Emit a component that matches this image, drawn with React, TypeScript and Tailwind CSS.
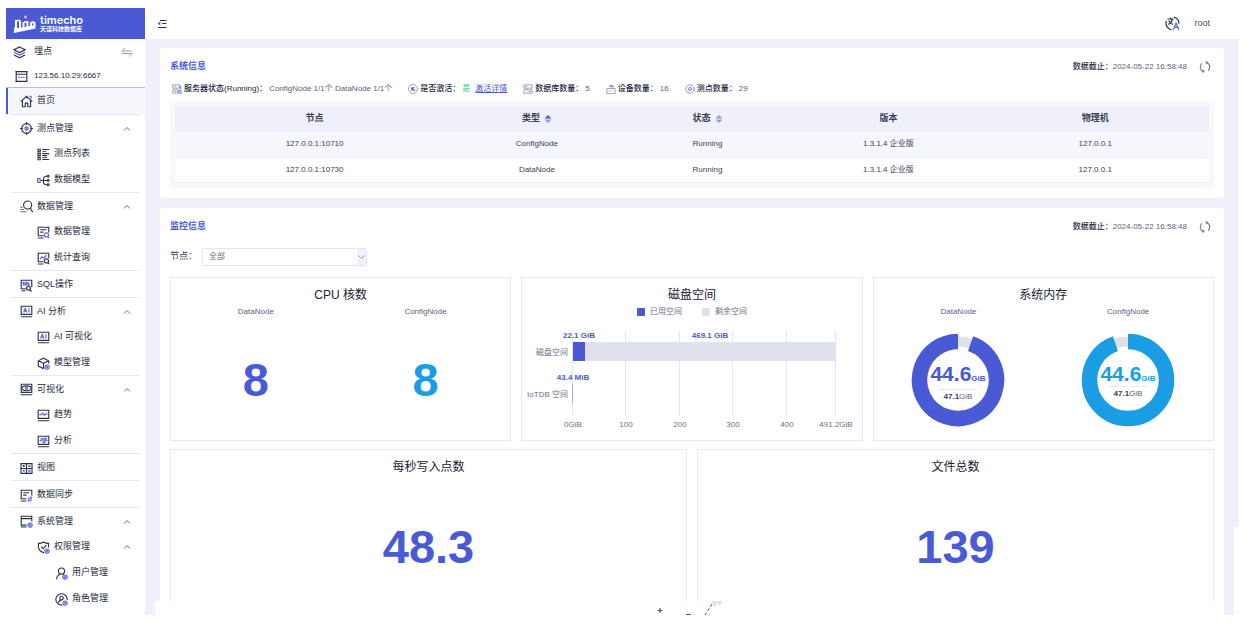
import { useState, type ReactNode } from 'react';
import clsx from 'clsx';

type IconName =
    | 'layers' | 'server' | 'home' | 'target' | 'list' | 'model' | 'search' | 'dataManage'
    | 'query' | 'sql' | 'ai' | 'cube' | 'eye' | 'trend' | 'analysis' | 'view' | 'sync'
    | 'system' | 'shield' | 'user' | 'role';

interface NavItem {
    label: string;
    icon: IconName;
    children?: NavItem[];
}

const DARK = '#2f3347';
const BLUE = '#5563e6';

const gear = (
    <g stroke={BLUE}>
        <circle cx="12.4" cy="12.4" r="2.6" />
        <circle cx="12.4" cy="12.4" r="0.6" />
    </g>
);

const monitor = <path d="M1.5 1.5h13v10h-13zM1 14.5h14" />;

const icons: Record<IconName, ReactNode> = {
    layers: (
        <>
            <path d="M8 1.2 14.8 4.6 8 8 1.2 4.6z" />
            <path d="M1.2 7.8 8 11.2l6.8-3.4" stroke={BLUE} />
            <path d="M1.2 11 8 14.6l6.8-3.6" />
        </>
    ),
    server: (
        <>
            <path d="M1.5 2h13v12h-13zM0.5 2h15M0.5 14h15M1.5 5.2h13" />
            <path d="M4 9h2M7 9h2M10 9h2" stroke={BLUE} />
        </>
    ),
    home: (
        <>
            <path d="M1 8.2 8 1.6l7 6.6M3 7v7.5h3.5V10h3v4.5H13V7" />
            <path d="M11.5 1.5h2.2v3" stroke={BLUE} />
        </>
    ),
    target: (
        <>
            <circle cx="8" cy="8" r="6" />
            <path d="M8 0v3.4M8 12.6V16M0 8h3.4M12.6 8H16" />
            <circle cx="8" cy="8" r="2" stroke={BLUE} />
            <circle cx="8" cy="8" r="0.4" stroke={BLUE} />
        </>
    ),
    list: (
        <>
            <path d="M1.2 1.6H4v2.8H1.2zM1.2 6.6H4v2.8H1.2zM1.2 11.6H4v2.8H1.2z" />
            <path d="M6.5 1.8h8.5M6.5 7h8.5M6.5 9.4h6M6.5 14.2H15" />
            <path d="M6.5 4.2h5M6.5 11.8h6" stroke={BLUE} />
        </>
    ),
    model: (
        <>
            <rect x="0.8" y="5.6" width="3" height="4.8" stroke={BLUE} />
            <path d="M4.5 8h8M13 2.8H11Q7.8 3 7.8 8t3.2 5.2h2" />
            <circle cx="13.8" cy="2.8" r="1.1" />
            <circle cx="13.8" cy="8" r="1.1" />
            <circle cx="13.8" cy="13.2" r="1.1" />
        </>
    ),
    search: (
        <>
            <circle cx="9.4" cy="6.2" r="5" />
            <path d="m12.6 10 3 4.8" />
            <path d="M0.5 9h2.6M0.5 11.7h4.4M0.5 14.4h7.5" stroke={BLUE} />
        </>
    ),
    dataManage: (
        <>
            <path d="M8 12H1.5V1.5h13V8M1 14.8h7M4 4.6h7.5M4 7.6h4" />
            <circle cx="11.6" cy="11" r="2.5" stroke={BLUE} />
            <path d="m13.4 13 1.8 2" stroke={BLUE} />
        </>
    ),
    query: (
        <>
            <path d="M8 12H1.5V1.5h13V8M1 14.8h7" />
            <path d="m3.6 8.8 2.6-3 2 1.8 3.6-3.6" stroke={BLUE} />
            <circle cx="11.6" cy="11" r="2.5" />
            <path d="m13.4 13 1.8 2" />
        </>
    ),
    sql: (
        <>
            <path d="M7 12H1.5V1.5h13V10M2 14.5h5" />
            <path d="M5.4 4.2H3.8v1.5h1.4v1.7H3.6M8.6 4.2H7v3h1.8zM10.6 4v3.4h1.8" stroke={BLUE} />
            <circle cx="10.4" cy="11.4" r="2.4" />
            <path d="m12 13.2 2.2 2.2" />
        </>
    ),
    ai: (
        <>
            {monitor}
            <path d="m4.4 9.2 2-5.2 2 5.2M5.2 7.6h2.6M11 4v5.2" stroke={BLUE} />
        </>
    ),
    cube: (
        <>
            <path d="M8 14.4 1.6 11.2V4.6L8 1.4l6.4 3.2V8M1.6 4.6 8 7.8l6.4-3.2M8 7.8v6.6" />
            {gear}
        </>
    ),
    eye: (
        <>
            {monitor}
            <ellipse cx="8" cy="6.5" rx="5.6" ry="3" />
            <circle cx="8" cy="6.5" r="1.4" stroke={BLUE} />
        </>
    ),
    trend: (
        <>
            {monitor}
            <path d="M3 7h2.4l1.8-2 2 2.8L11 6h2" stroke={BLUE} />
        </>
    ),
    analysis: (
        <>
            {monitor}
            <path d="M3.2 7h2V4.4h2.4v5h2V4h1.6v3h1.8" stroke={BLUE} />
        </>
    ),
    view: (
        <>
            <path d="M1.2 2h13.6v12H1.2zM1.2 8h13.6M8 2v12M3.4 5h2.4M4.6 3.8v2.4M10 5h3M3.4 11h2.4" />
            <path d="M10 10.2h3M10 12h3" stroke={BLUE} />
        </>
    ),
    sync: (
        <>
            <path d="M8 12H1.5V1.5h13V8M1 14.8h7M4 4.6h7.5M4 7.6h4" />
            <path d="M11 10v5l-1.4-1.6M13.4 15v-5l1.4 1.6" stroke={BLUE} />
        </>
    ),
    system: (
        <>
            <path d="M8 12.5H1.5V1.5h13V8M1.5 4.4h13M1 14.8h7" />
            {gear}
        </>
    ),
    shield: (
        <>
            <path d="M8.6 14.6Q1.8 12 1.8 7V3q3.6 0 6.2-1.8Q10.6 3 14.2 3v5" />
            <path d="m5 7 2.6 2.4L11.4 5" />
            {gear}
        </>
    ),
    user: (
        <>
            <circle cx="8" cy="5" r="3.8" />
            <path d="M2 15q.2-4.6 4-6M9.8 9.2l1 .8" />
            {gear}
        </>
    ),
    role: (
        <>
            <path d="M9 14.9A7 7 0 1 1 15 8.6" />
            <circle cx="8" cy="6.2" r="2.2" />
            <path d="M4.2 12.6q.4-3.400 3.800-3.800" />
            {gear}
        </>
    ),
};

const Icon = ({ name }: { name: IconName }) => (
    <svg viewBox="0 0 16 16" className="size-[13px] shrink-0" fill="none" stroke={DARK} strokeWidth="1.4" aria-hidden="true">
        {icons[name]}
    </svg>
);

const navItems: NavItem[] = [
    {
        label: '测点管理',
        icon: 'target',
        children: [
            { label: '测点列表', icon: 'list' },
            { label: '数据模型', icon: 'model' },
        ],
    },
    {
        label: '数据管理',
        icon: 'search',
        children: [
            { label: '数据管理', icon: 'dataManage' },
            { label: '统计查询', icon: 'query' },
        ],
    },
    { label: 'SQL操作', icon: 'sql' },
    {
        label: 'AI 分析',
        icon: 'ai',
        children: [
            { label: 'AI 可视化', icon: 'ai' },
            { label: '模型管理', icon: 'cube' },
        ],
    },
    {
        label: '可视化',
        icon: 'eye',
        children: [
            { label: '趋势', icon: 'trend' },
            { label: '分析', icon: 'analysis' },
        ],
    },
    { label: '视图', icon: 'view' },
    { label: '数据同步', icon: 'sync' },
    {
        label: '系统管理',
        icon: 'system',
        children: [
            {
                label: '权限管理',
                icon: 'shield',
                children: [
                    { label: '用户管理', icon: 'user' },
                    { label: '角色管理', icon: 'role' },
                ],
            },
        ],
    },
];

const indents = ['pl-[14px]', 'pl-[31px]', 'pl-[49px]'];

const NavEntry = ({ item, level = 0 }: { item: NavItem; level?: number }) => {
    const [open, setOpen] = useState(true);
    const row = clsx('flex w-full items-center gap-1 pt-[2px] pr-[14px] text-left', indents[level]);

    if (!item.children) {
        return (
            <li>
                <a href="#" className={clsx(row, 'h-[26px]')}>
                    <Icon name={item.icon} />
                    {item.label}
                </a>
            </li>
        );
    }

    return (
        <li>
            <button
                type="button"
                aria-expanded={open}
                onClick={() => setOpen(!open)}
                className={clsx(row, level === 0 ? 'h-[25px]' : 'h-[26px]')}
            >
                <Icon name={item.icon} />
                <span className="flex-1">{item.label}</span>
                <svg viewBox="0 0 8 8" className={clsx('size-2', !open && 'rotate-180')} fill="none" stroke="#6b6f80">
                    <path d="m1 5.5 3-3 3 3" />
                </svg>
            </button>
            {open && (
                <ul>
                    {item.children.map((child) => (
                        <NavEntry key={child.label} item={child} level={level + 1} />
                    ))}
                </ul>
            )}
        </li>
    );
};

const Sidebar = () => (
    <aside className="w-[139px] shrink-0 overflow-hidden bg-white text-[9px] text-[#24283a]">
        <a href="#" className="flex h-[31px] items-center gap-1 bg-[#495ad4] pl-2 text-white">
            <svg viewBox="0 0 22 18" className="h-[18px] w-[22px]" fill="none" stroke="white" strokeWidth="2" aria-hidden="true">
                <path d="M0 18v-5.5l4 .5 17.500-3V13.500z" fill="white" stroke="none" />
                <path d="M2 14V5M6 13V5.500M9.500 13V7M13.500 12.500V6M17 12V8q2-1.500 3.500 0v3" />
                <path d="M1 5.500h5M10 7h3.500" strokeWidth="1.500" />
                <circle cx="11.500" cy="2" r="1.400" fill="#f5b98a" stroke="none" />
            </svg>
            <span className="flex flex-col">
                <span className="font-['Inter'] text-[11px] leading-[11px] font-semibold">timecho</span>
                <span className="text-[6px] leading-[7px] font-bold">天谋科技数据库</span>
            </span>
        </a>
        <div className="border-b border-[#b9bccb] pr-3 pl-[7px]">
            <div className="flex h-6 items-center gap-2 pt-[2px]">
                <Icon name="layers" />
                <span className="flex-1">埋点</span>
                <button type="button" aria-label="切换实例">
                    <svg viewBox="0 0 12 10" className="h-[10px] w-3" fill="none" stroke="#9ba0b8">
                        <path d="M4 1 1 4h10M1 6.5h10l-3 3" />
                    </svg>
                </button>
            </div>
            <div className="flex h-6 items-center gap-[6px] pt-[2px] pl-[2px]">
                <Icon name="server" />
                <span className="text-[8px]">123.56.10.29:6667</span>
            </div>
        </div>
        <nav>
            <a href="#" aria-current="page" className="flex h-[26px] items-center gap-1 border-l-2 border-[#495ad4] bg-[#f6f7fc] pl-3">
                <Icon name="home" />
                首页
            </a>
            {navItems.map((item) => (
                <ul key={item.label} className="before:mx-[5px] before:block before:h-px before:bg-[#e6e7f3]">
                    <NavEntry item={item} />
                </ul>
            ))}
        </nav>
    </aside>
);

const Header = () => (
    <header className="flex h-[31px] shrink-0 items-center justify-between bg-white pr-[29px] pl-3">
        <button type="button" aria-label="收起菜单">
            <svg viewBox="0 0 10 10" className="size-[10px]" fill="none" stroke={DARK}>
                <path d="M3 1.5h6.500M5 4.500h4.500M1 8.500h8.500" />
                <path d="M3.400 2.300.6 4.500l2.800 2.200z" fill={BLUE} stroke="none" />
            </svg>
        </button>
        <div className="flex items-center gap-[14px] text-[9px] text-[#4b4f63]">
            <button type="button" aria-label="语言">
                <svg viewBox="0 0 16 16" className="size-[15px]" fill="none" stroke={DARK} strokeWidth="1.3">
                    <path d="M9.5 1.2a7 7 0 0 1 5.3 7M7 14.8A7 7 0 0 1 1.6 5.4" />
                    <path d="M2.5 3.2h7M6 1.5v1.7M3.6 9q3.6-2 4.4-5.8M4 4.8Q5.5 8 8.6 9" />
                    <path d="m8.8 14.6 3-7 3 7M9.8 12.2h4" stroke={BLUE} />
                </svg>
            </button>
            <span>root</span>
        </div>
    </header>
);

const SectionHead = ({ title }: { title: string }) => (
    <div className="flex h-4 items-center justify-between">
        <h2 className="text-[9px] font-bold text-[#495ad4]">{title}</h2>
        <div className="flex items-center pr-[3px] text-[8px] text-[#5b5f7a]">
            <span className="font-medium text-[#24283a]">数据截止：</span>
            <time>2024-05-22 16:58:48</time>
            <button type="button" aria-label="刷新" className="ml-3">
                <svg viewBox="0 0 12 12" className="size-3" fill="none" stroke="#7c809a" strokeWidth="1.2">
                    <path d="M7.5 1.4a4.8 4.8 0 0 1 1.6 8.2M4.5 10.6a4.8 4.8 0 0 1-1.6-8.2" />
                    <path d="M9 1.2 7.2 1.3l.6 1.8M3 10.8l1.8-.1-.6-1.8" />
                </svg>
            </button>
        </div>
    </div>
);

const StatItem = ({ label, icon, children }: { label: string; icon: ReactNode; children: ReactNode }) => (
    <div className="flex items-center gap-[2px]">
        <svg viewBox="0 0 12 12" className="size-[10px]" fill="none" stroke="#8d91ac" aria-hidden="true">
            {icon}
        </svg>
        <span className="font-medium text-[#24283a]">{label}：</span>
        {children}
    </div>
);

const SortArrows = ({ active }: { active?: boolean }) => (
    <svg viewBox="0 0 8 8" className="size-2" aria-hidden="true">
        <path d="M4 0 7.5 3.4h-7z" fill={active ? '#495ad4' : '#9b9eb6'} />
        <path d="M4 8 7.5 4.6h-7z" fill="#9b9eb6" />
    </svg>
);

const nodes = [
    { address: '127.0.0.1:10710', type: 'ConfigNode', status: 'Running', version: '1.3.1.4 企业版', host: '127.0.0.1' },
    { address: '127.0.0.1:10730', type: 'DataNode', status: 'Running', version: '1.3.1.4 企业版', host: '127.0.0.1' },
];

const SystemInfo = () => (
    <section className="rounded bg-white px-[10px] pt-[11px] pb-[10px]">
        <SectionHead title="系统信息" />
        <div className="mt-[6px] flex h-4 items-center gap-4 pl-[2px] text-[8px] whitespace-nowrap text-[#5b5f7a]">
            <StatItem
                label="服务器状态(Running)"
                icon={<><path d="M1 1h8v4H1zM1 7h6v4H1zM3 3h2M3 9h2" /><path d="M8 8h3v3H8zM10 2v4h1" stroke={BLUE} /></>}
            >
                <span>ConfigNode 1/1个 DataNode 1/1个</span>
            </StatItem>
            <StatItem
                label="是否激活"
                icon={<><circle cx="6" cy="6" r="5.4" /><path d="M4.5 8V4.5H8M4.5 4.5l4 4" stroke={BLUE} strokeWidth="1.4" /></>}
            >
                <span className="text-[#3ecf8e]">是</span>
                <a href="#" className="ml-[3px] text-[#495ad4] underline">激活详情</a>
            </StatItem>
            <StatItem
                label="数据库数量"
                icon={<><path d="M1 1h10v4H1zM1 7h10v4H1zM5 5v2" /><path d="M3 3h2M7 9h2" stroke={BLUE} /></>}
            >
                <span>5</span>
            </StatItem>
            <StatItem
                label="设备数量"
                icon={<><path d="M1 5.5h10v6H1zM3 8.5h1.5M6 8.5h1.5" /><path d="M3.5 3q3-3 6 0M8 4v1.5M5 3.5q1.5-1 3 0" stroke={BLUE} /></>}
            >
                <span>16</span>
            </StatItem>
            <StatItem
                label="测点数量"
                icon={<><circle cx="6" cy="6" r="5" strokeDasharray="6 2" /><circle cx="6" cy="6" r="1.8" stroke={BLUE} /><path d="M6 0v2M6 10v2M0 6h2M10 6h2" /></>}
            >
                <span>29</span>
            </StatItem>
        </div>
        <div className="mt-1 bg-[#f7f8fc] p-[5px]">
            <table className="w-full table-fixed text-center text-[8px] text-[#3a3d57]">
                <thead className="bg-[#f0f0fb] text-[9px]">
                    <tr className="h-[26px]">
                        <th className="w-[27%] font-bold">节点</th>
                        <th className="w-[16%] font-bold">
                            <button type="button" className="inline-flex items-center gap-1">类型<SortArrows active /></button>
                        </th>
                        <th className="w-[17%] font-bold">
                            <button type="button" className="inline-flex items-center gap-1">状态<SortArrows /></button>
                        </th>
                        <th className="w-[18%] font-bold">版本</th>
                        <th className="w-[22%] font-bold">物理机</th>
                    </tr>
                </thead>
                <tbody>
                    {nodes.map((node) => (
                        <tr key={node.address} className="h-[25px] border-b border-[#ecedf6] odd:bg-[#f6f7fc] even:bg-white">
                            <td>{node.address}</td>
                            <td>{node.type}</td>
                            <td>{node.status}</td>
                            <td>{node.version}</td>
                            <td>{node.host}</td>
                        </tr>
                    ))}
                </tbody>
            </table>
        </div>
    </section>
);

const Panel = ({ title, className, children }: { title: string; className?: string; children: ReactNode }) => (
    <article className={clsx('flex min-w-0 flex-col border border-[#e8e8f3] pt-2', className)}>
        <h3 className="text-center text-[12px] leading-[18px] text-[#1d2033]">{title}</h3>
        {children}
    </article>
);

const NodeColumn = ({ name, children }: { name: string; children: ReactNode }) => (
    <div className="flex flex-1 flex-col text-center">
        <p className="text-[8px] leading-4 text-[#5b5f7a]">{name}</p>
        <div className="flex flex-1 items-center justify-center">{children}</div>
    </div>
);

const ticks = [
    { x: 47, label: '0GiB' },
    { x: 100, label: '100' },
    { x: 154, label: '200' },
    { x: 207, label: '300' },
    { x: 261, label: '400' },
    { x: 310, label: '491.2GiB' },
];

const DiskChart = () => (
    <svg viewBox="0 0 331 108" className="h-[108px] w-[331px]" fontSize="8" role="img" aria-label="磁盘空间">
        {ticks.map((tick) => (
            <g key={tick.label}>
                <rect x={tick.x - 1} y="5" width="1" height="85" fill="#e4e5f1" />
                <text x={tick.x} y="101" textAnchor="middle" fill="#6b6f87">{tick.label}</text>
            </g>
        ))}
        <rect x="47" y="16" width="12" height="19" fill="#495ad4" />
        <rect x="59" y="16" width="251" height="19" fill="#dfe1ec" />
        <rect x="46" y="58" width="1" height="19" fill="#a9b1ea" />
        <g fill="#495ad4" fontWeight="bold" textAnchor="middle">
            <text x="53" y="12">22.1 GiB</text>
            <text x="184" y="12">469.1 GiB</text>
            <text x="47" y="54">43.4 MiB</text>
        </g>
        <g fill="#6b6f87" textAnchor="end">
            <text x="42" y="29">磁盘空间</text>
            <text x="42" y="71">IoTDB 空间</text>
        </g>
    </svg>
);

interface DonutProps {
    color: string;
    used: number;
    total: number;
    gapFirst?: boolean;
}

const Donut = ({ color, used, total, gapFirst }: DonutProps) => {
    const share = (used / total) * 100;
    const start = gapFirst ? -90 + (100 - share) * 3.6 : -90;
    const lineY = gapFirst ? 56 : 53;
    return (
        <svg viewBox="0 0 94 94" className="size-[94px]" role="img" aria-label={`${used} / ${total} GiB`}>
            <circle cx="47" cy="47" r="38.5" fill="none" stroke="#dfe1ec" strokeWidth="10" />
            <circle
                cx="47"
                cy="47"
                r="38.5"
                fill="none"
                stroke={color}
                strokeWidth="15.5"
                pathLength="100"
                strokeDasharray={`${share} ${100 - share}`}
                transform={`rotate(${start} 47 47)`}
            />
            <text x="47" y="48" textAnchor="middle" fill={color} fontWeight="bold" fontSize="21">
                {used}
                <tspan fontSize="8">GiB</tspan>
            </text>
            <rect x="28" y={lineY} width="38" height="1" fill="#e8e8f3" />
            <text x="47" y={lineY + 10} textAnchor="middle" fill="#3a3d57" fontSize="8">
                <tspan fontWeight="bold">{total}</tspan>
                <tspan fill="#5b5f7a">GiB</tspan>
            </text>
        </svg>
    );
};

const MonitorInfo = () => (
    <section className="rounded bg-white px-[10px] pt-[11px] pb-[10px]">
        <SectionHead title="监控信息" />
        <div className="mt-[13px] flex items-center text-[#3a3d57]">
            <label htmlFor="node" className="w-8 text-[9px]">节点：</label>
            <div className="relative w-[165px]">
                <select id="node" className="block h-[18px] w-full appearance-none rounded-xs border border-[#e4e5f1] bg-white pl-[6px] text-[8px] text-[#6b6f87]">
                    <option>全部</option>
                </select>
                <span className="pointer-events-none absolute inset-y-px right-px flex w-[9px] items-center bg-[#f0f0fb]">
                    <svg viewBox="0 0 9 8" className="h-2 w-[9px]" fill="none" stroke="#9ba0b8">
                        <path d="m1.5 2.5 3 3 3-3" />
                    </svg>
                </span>
            </div>
        </div>
        <div className="mt-[11px] grid grid-cols-3 gap-[10px]">
            <Panel title="CPU 核数" className="min-h-[164px]">
                <div className="flex flex-1">
                    <NodeColumn name="DataNode">
                        <strong className="text-[47px] leading-none text-[#495ad4]">8</strong>
                    </NodeColumn>
                    <NodeColumn name="ConfigNode">
                        <strong className="text-[47px] leading-none text-[#1a9de5]">8</strong>
                    </NodeColumn>
                </div>
            </Panel>
            <Panel title="磁盘空间" className="min-h-[164px]">
                <div className="flex h-4 items-center justify-center gap-5 text-[8px] text-[#6b6f87]">
                    <span className="flex items-center gap-[5px]"><i className="size-2 rounded-[1px] bg-[#495ad4]" />已用空间</span>
                    <span className="flex items-center gap-[5px]"><i className="size-2 rounded-[1px] bg-[#dfe1ec]" />剩余空间</span>
                </div>
                <div className="flex flex-1 items-center justify-center">
                    <DiskChart />
                </div>
            </Panel>
            <Panel title="系统内存" className="min-h-[164px]">
                <div className="flex flex-1">
                    <NodeColumn name="DataNode">
                        <Donut color="#495ad4" used={44.6} total={47.1} gapFirst />
                    </NodeColumn>
                    <NodeColumn name="ConfigNode">
                        <Donut color="#1a9de5" used={44.6} total={47.1} />
                    </NodeColumn>
                </div>
            </Panel>
        </div>
        <div className="mt-2 grid grid-cols-2 gap-[10px]">
            <Panel title="每秒写入点数" className="min-h-[170px]">
                <strong className="flex flex-1 items-center justify-center text-[47px] leading-none text-[#495ad4]">48.3</strong>
            </Panel>
            <Panel title="文件总数" className="min-h-[170px]">
                <strong className="flex flex-1 items-center justify-center text-[47px] leading-none text-[#495ad4]">139</strong>
            </Panel>
        </div>
    </section>
);

export default function App() {
    return (
        <div className="flex h-screen bg-white pt-2 pr-[7px] pb-[10px] pl-[6px] font-['Liberation_Sans','Noto_Sans_CJK_SC',sans-serif]">
            <Sidebar />
            <div className="relative flex min-w-0 flex-1 flex-col bg-[#f0f0fb]">
                <Header />
                <main className="flex min-h-0 flex-1 flex-col gap-[10px] overflow-hidden pt-[9px] pr-[15px] pl-[15px] *:shrink-0">
                    <SystemInfo />
                    <MonitorInfo />
                </main>
                <footer className="mr-[15px] ml-[10px] flex h-[14px] shrink-0 justify-center bg-white">
                    <svg viewBox="0 0 70 14" className="h-[14px] w-[70px]" fill="none" stroke="#4f5573" aria-hidden="true">
                        <path d="M2.5 9.5h5M5 7v5" strokeWidth="1.2" />
                        <path d="M31 13.5h5" />
                        <path d="m50 14 7-11" strokeDasharray="3 2" />
                        <path d="M57 0h10l-2 5-3-3-3 5-1-4z" fill="#dfe1ec" stroke="none" />
                    </svg>
                </footer>
                {/* scrollbar thumb */}
                <div className="absolute right-0 bottom-0 h-[88px] w-[5px] rounded-t-xs bg-white" />
            </div>
        </div>
    );
}
